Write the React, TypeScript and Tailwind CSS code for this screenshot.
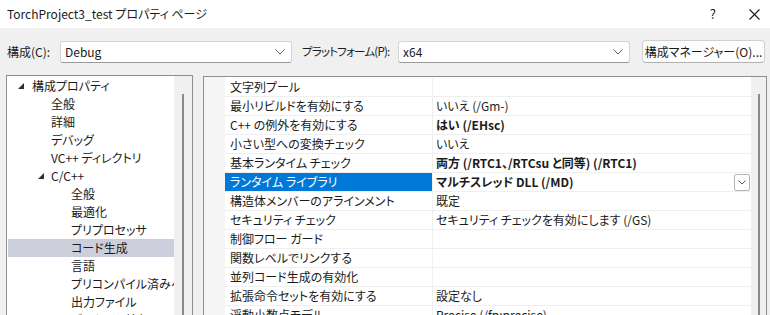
import React from "react";

const font = "font-['Noto_Sans_CJK_JP','Noto_Sans',sans-serif] [font-feature-settings:'palt']";

type TreeItem = { t: string; lvl: number; tri?: boolean; sel?: boolean };
const tree: TreeItem[] = [
  { t: "構成プロパティ", lvl: 0, tri: true },
  { t: "全般", lvl: 1 },
  { t: "詳細", lvl: 1 },
  { t: "デバッグ", lvl: 1 },
  { t: "VC++ ディレクトリ", lvl: 1 },
  { t: "C/C++", lvl: 1, tri: true },
  { t: "全般", lvl: 2 },
  { t: "最適化", lvl: 2 },
  { t: "プリプロセッサ", lvl: 2 },
  { t: "コード生成", lvl: 2, sel: true },
  { t: "言語", lvl: 2 },
  { t: "プリコンパイル済みヘッダー", lvl: 2 },
  { t: "出力ファイル", lvl: 2 },
  { t: "ブラウザー情報", lvl: 2 },
];

type Prop = { n: string; v: string; b?: boolean; sel?: boolean };
const props: Prop[] = [
  { n: "文字列プール", v: "" },
  { n: "最小リビルドを有効にする", v: "いいえ (/Gm-)" },
  { n: "C++ の例外を有効にする", v: "はい (/EHsc)", b: true },
  { n: "小さい型への変換チェック", v: "いいえ" },
  { n: "基本ランタイム チェック", v: "両方 (/RTC1、/RTCsu と同等) (/RTC1)", b: true },
  { n: "ランタイム ライブラリ", v: "マルチスレッド DLL (/MD)", b: true, sel: true },
  { n: "構造体メンバーのアラインメント", v: "既定" },
  { n: "セキュリティ チェック", v: "セキュリティ チェックを有効にします (/GS)" },
  { n: "制御フロー ガード", v: "" },
  { n: "関数レベルでリンクする", v: "" },
  { n: "並列コード生成の有効化", v: "" },
  { n: "拡張命令セットを有効にする", v: "設定なし" },
  { n: "浮動小数点モデル", v: "Precise (/fp:precise)" },
];

function Chevron() {
  return (
    <svg width="10" height="6" viewBox="0 0 10 6">
      <path d="M0.5 0.5 L5 5 L9.5 0.5" fill="none" stroke="#606060" strokeWidth="1" />
    </svg>
  );
}

function Tri() {
  return (
    <svg width="6" height="6" viewBox="0 0 6 6">
      <polygon points="6,0 6,6 0,6" fill="#303030" />
    </svg>
  );
}

function Combo({ text, w }: { text: string; w: string }) {
  return (
    <div className={`${w} shrink-0 h-[22px] bg-white border border-[#d4d4d4] border-b-[#9a9a9a] rounded-[3px] flex items-center justify-between pl-[4px] pr-[6px]`}>
      <span className="text-[12px] text-[#1a1a1a]">{text}</span>
      <Chevron />
    </div>
  );
}

export default function App() {
  return (
    <div className={`w-[770px] h-[315px] overflow-hidden bg-[#f0f0f0] text-[#1a1a1a] ${font}`}>
      {/* title bar */}
      <div className="h-[28px] bg-white flex items-center pl-[7px] pr-[10px]">
        <span className="text-[12px] flex-1">TorchProject3_test プロパティ ページ</span>
        <span className="text-[13px] mr-[33px]">?</span>
        <svg width="11" height="11" viewBox="0 0 11 11">
          <path d="M0.5 0.5 L10.5 10.5 M10.5 0.5 L0.5 10.5" stroke="#1a1a1a" strokeWidth="1.1" />
        </svg>
      </div>
      {/* toolbar */}
      <div className="h-[47px] flex items-start pt-[13px] pl-[7px] text-[12px]">
        <div className="h-[22px] flex items-center w-[53px] shrink-0 whitespace-nowrap">構成(C):</div>
        <Combo text="Debug" w="w-[232px]" />
        <div className="h-[22px] flex items-center ml-[10px] w-[96px] shrink-0 whitespace-nowrap text-[11.5px] tracking-[-0.07em]">プラットフォーム(P):</div>
        <Combo text="x64" w="w-[232px]" />
        <div className="ml-[12px] w-[123px] shrink-0 h-[23px] -mt-[1px] rounded-[4px] border border-[#d0d0d0] border-b-[#b0b0b0] bg-[#fdfdfd] flex items-center justify-center whitespace-nowrap">
          構成マネージャー(O)...
        </div>
      </div>
      {/* panels */}
      <div className="flex pl-[6px] gap-[10px] text-[12px]">
        {/* tree */}
        <div className="w-[187px] h-[300px] border border-[#8f8f8f] bg-white flex">
          <div className="flex-1 pt-[1px] overflow-hidden">
            {tree.map((it, i) => (
              <div
                key={i}
                className={`h-[18px] ml-[1px] flex items-center whitespace-nowrap ${it.sel ? "bg-[#cccedb]" : ""}`}
              >
                {it.lvl === 0 && (
                  <div className="w-[24px] shrink-0 pl-[10px] flex items-center"><Tri /></div>
                )}
                {it.lvl === 1 && (
                  <div className="w-[43px] shrink-0 pl-[30px] flex items-center">{it.tri ? <Tri /> : null}</div>
                )}
                {it.lvl === 2 && <div className="w-[63px] shrink-0" />}
                <span>{it.t}</span>
              </div>
            ))}
          </div>
          <div className="w-[18px] shrink-0 bg-[#f0f0f0] flex justify-center pt-[18px]">
            <div className="w-[2px] h-[300px] bg-[#8a8a8a]" />
          </div>
        </div>
        {/* grid */}
        <div className="w-[564px] h-[300px] mt-[1px] border border-[#8f8f8f] bg-[#f5f5f5] flex">
          <div className="w-[21px] shrink-0" />
          <div className="flex-1 bg-white pt-[1px] overflow-hidden">
            {props.map((p, i) => (
              <div key={i} className="h-[19px] flex border-b border-[#efefef]">
                <div
                  className={`w-[208px] shrink-0 pl-[5px] flex items-center whitespace-nowrap border-r border-[#efefef] ${p.sel ? "bg-[#0078d7] text-white" : ""}`}
                >
                  {p.n}
                </div>
                <div className={`flex-1 pl-[3px] flex items-center justify-between whitespace-nowrap ${p.b ? "font-bold" : ""}`}>
                  <span>{p.v}</span>
                  {p.sel && (
                    <div className="w-[16px] h-[17px] mr-[1px] border border-[#b4b4b4] rounded-[2px] bg-white flex items-center justify-center">
                      <svg width="8" height="5" viewBox="0 0 8 5">
                        <path d="M0.5 0.5 L4 4 L7.5 0.5" fill="none" stroke="#555" strokeWidth="1" />
                      </svg>
                    </div>
                  )}
                </div>
              </div>
            ))}
          </div>
          <div className="w-[15px] shrink-0 bg-[#f0f0f0] flex justify-center pt-[17px]">
            <div className="w-[2px] h-[300px] bg-[#8a8a8a]" />
          </div>
        </div>
      </div>
    </div>
  );
}
